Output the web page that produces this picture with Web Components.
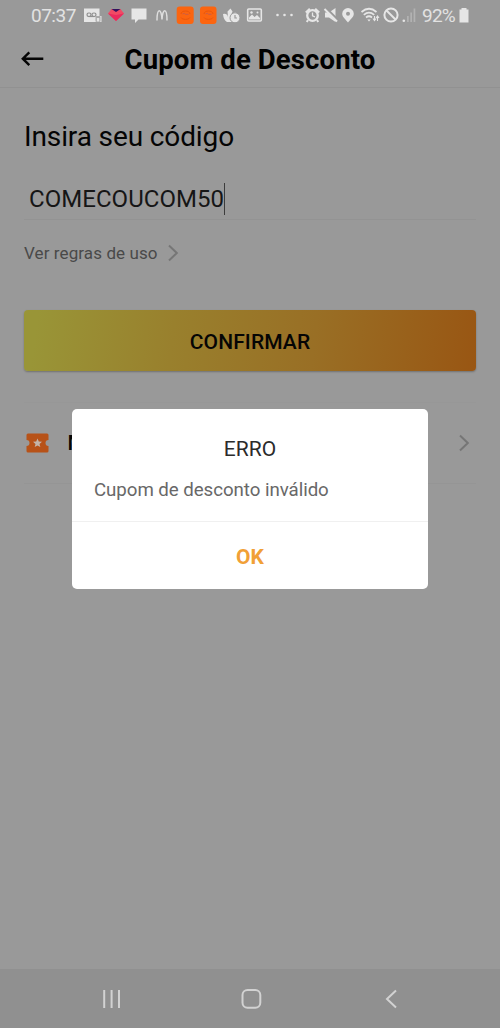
<!DOCTYPE html>
<html lang="pt-BR">
<head>
<meta charset="utf-8">
<title>Cupom de Desconto</title>
<style>
html,body{margin:0;height:100%;background:#999}
body{font-family:Roboto,"Liberation Sans",sans-serif;overflow:hidden}
</style>
</head>
<body>
<coupon-app></coupon-app>
<script>
const define = (name, html) => customElements.define(name, class extends HTMLElement {
  constructor() {
    super();
    const t = document.createElement('template');
    t.innerHTML = html;
    this.attachShadow({mode: 'open'}).appendChild(t.content.cloneNode(true));
  }
});

/* Each status glyph is a cell of the bar: its left edge, its width and its shapes. */
const cell = (x, w, shapes) => `<svg width="${w}" height="32" viewBox="${x} 0 ${w} 32">${shapes}</svg>`;

define('status-bar', `
<style>
:host{display:flex;height:32px;align-items:center;color:#e2e2e2;padding-left:31px;box-sizing:border-box}
svg{display:block;flex:none;fill:#e6e6e6}
span{flex:none;font-size:19px;line-height:32px;white-space:nowrap}
.time{width:49px;letter-spacing:-.5px}
.pct{width:37px;letter-spacing:-.8px}
</style>
<span class="time">07:37</span>` +
cell(80, 24, `<path d="M84 8.500h15.500v7.500h2V22H84z"/><rect x="87" y="13" width="4" height="3.500" rx="1.700" fill="none" stroke="#8f8f8f" stroke-width="1.200"/><rect x="92" y="13" width="4" height="3.500" rx="1.700" fill="none" stroke="#8f8f8f" stroke-width="1.200"/><path d="M88.500 16.500h6" stroke="#8f8f8f" stroke-width="1.200"/><rect x="95.500" y="16" width="5" height="6" rx="1" fill="#aaa"/><path d="M96.800 18h2.500v3.500h-2.500z"/>`) +
cell(104, 24, `<path d="M111.500 9h9l3.500 4.500-8 7.500-8-7.500z" fill="#f04a64"/><path d="M108 13.500l8 1.500 8-1.500-8 7.500z" fill="#ea2a5d"/><path d="M111.500 9h9l-4.500 3z" fill="#31125e"/>`) +
cell(128, 24, `<path d="M131.500 8.500h15v11h-8l-3.500 3.500v-3.500h-3.500z"/>`) +
cell(152, 22, `<path d="M157 20.500c0-13 4.500-12.500 5-1 .5-11.500 5-12 5 1" fill="none" stroke="#dedede" stroke-width="1.500"/>`) +
cell(174, 24, `<rect x="176.700" y="6.500" width="17" height="17.500" rx="3" fill="#fb6510"/><path d="M181 14c0-4 9-4 9 0M181 17.500c1.500 2.500 7.500 2.500 9 0" fill="none" stroke="#e9560c" stroke-width="1"/><path d="M182.500 14q2-1.500 3 .3h3" fill="none" stroke="#cb5d45" stroke-width="1"/>`) +
cell(198, 24, `<rect x="200" y="6.500" width="16.500" height="17.500" rx="3" fill="#fb6510"/><path d="M204 14c0-4 9-4 9 0M204 17.500c1.500 2.500 7.500 2.500 9 0" fill="none" stroke="#e9560c" stroke-width="1"/><path d="M205.500 14q2-1.500 3 .3h3" fill="none" stroke="#cb5d45" stroke-width="1"/>`) +
cell(222, 22, `<path d="M223 14q4-1 5 3l-.5-5.500 3-3 2 3-2 5q2-4 5.500-4l-3.500 9.500h-5.500q-3.500-2-4-8z"/><circle cx="235" cy="17.800" r="5" stroke="#999" stroke-width="1"/><path d="M235 15v3h2" fill="none" stroke="#999" stroke-width="1.200"/>`) +
cell(244, 28, `<rect x="247.700" y="9" width="13.600" height="12" rx="1" fill="none" stroke="#e6e6e6" stroke-width="1.600"/><path d="M249 19.500v-2l3-3 2.500 2.500 2.500-2 3 3v1.500z"/><circle cx="251.500" cy="12.500" r="1.200"/><circle cx="257.500" cy="12.500" r="1"/>`) +
cell(272, 30, `<circle cx="277.500" cy="15" r="1.300"/><circle cx="284.500" cy="15" r="1.300"/><circle cx="291.500" cy="15" r="1.300"/>`) +
cell(302, 20, `<path d="M305.800 12.500l4-3.800M319.200 12.500l-4-3.800M308 20l-1.200 2M317 20l1.200 2" fill="none" stroke="#e6e6e6" stroke-width="2"/><circle cx="312.500" cy="15.500" r="5.300" fill="none" stroke="#e6e6e6" stroke-width="2.300"/><path d="M312.500 12.500v3.300l2.500 1" fill="none" stroke="#e6e6e6" stroke-width="1.300"/>`) +
cell(322, 18, `<path d="M325 12.500h4l6.500-4.500v14l-6.500-4.500h-4z"/><path d="M325.500 9.500l12 12" stroke="#999" stroke-width="2.400" transform="translate(1 -1)"/><path d="M324.500 9l12.500 12.500" stroke="#e6e6e6" stroke-width="2"/>`) +
cell(340, 18, `<path d="M348 8a5.800 5.800 0 0 1 5.800 5.700c0 3.500-3.800 5.800-5.800 8.800-2-3-5.800-5.300-5.800-8.800A5.800 5.800 0 0 1 348 8zm0 3.700a2 2 0 1 0 0 4 2 2 0 0 0 0-4z" fill-rule="evenodd"/>`) +
cell(358, 24, `<path d="M361.500 12q7.500-6.500 15 0M363.800 14.800q5.200-4.500 10.400 0M366 17.500q3-2.500 6 0" fill="none" stroke="#e6e6e6" stroke-width="1.700"/><path d="M367.300 19.500h3.400L369 21.500z"/><path d="M374.500 16v4M377.500 21v-4.500M373 18.500l1.500 2 1.500-2M376 18l1.500-2 1.500 2" fill="none" stroke="#e6e6e6" stroke-width="1.100"/>`) +
cell(382, 19, `<circle cx="391" cy="15" r="6.600" fill="none" stroke="#e6e6e6" stroke-width="2"/><path d="M386.500 10.500l9 9" stroke="#e6e6e6" stroke-width="2"/>`) +
cell(401, 21, `<circle cx="403.800" cy="20.800" r="1.300"/><path d="M407 16h1.700v6H407zM410.300 12.500h1.700V22h-1.700zM413.600 8.500h1.700V22h-1.700z" fill="#b2b2b2"/>`) +
`<span class="pct">92%</span>` +
cell(459, 12, `<path d="M461.500 8h5v1.500h2V22.500h-9V9.500h2z"/>`));

define('app-header', `
<style>
:host{display:grid;grid-template-columns:72px 1fr 72px;height:56px;align-items:center;box-sizing:border-box;border-bottom:1px solid #919191}
svg{display:block;margin:-2px 0 0 20px}
h1{margin:1px 0 0;font-size:27.500px;letter-spacing:.12px;font-weight:700;line-height:36px;text-align:center;white-space:nowrap;color:#000}
</style>
<svg width="26" height="20" viewBox="0 0 26 20" fill="none" stroke="#050505" stroke-width="2.400"><path d="M23.300 9.700H3M9.300 3.300L2.800 9.700l6.500 6.400"/></svg>
<h1><slot></slot></h1>`);

define('chevron-icon', `
<style>:host{display:block;flex:none}svg{display:block}</style>
<svg width="12" height="18" viewBox="0 0 12 18" fill="none" stroke="#767676" stroke-width="2"><path d="M2 1.500L9.800 9 2 16.500"/></svg>`);

define('code-field', `
<style>
:host{display:block}
h2{margin:0;font-weight:400;font-size:28px;letter-spacing:-.12px;line-height:36px;color:#050505;white-space:nowrap}
.input{display:flex;align-items:center;height:40px;margin-top:24px;padding-left:5px;border-bottom:1px solid #939393;font-size:24px;color:#161616}
.text{letter-spacing:.05px;white-space:nowrap}
.caret{width:1px;height:32px;background:#3c3c3c}
</style>
<h2><slot name="label"></slot></h2>
<div class="input"><span class="text"><slot></slot></span><i class="caret"></i></div>`);

define('rules-link', `
<style>
:host{display:flex;align-items:center;height:24px;font-size:17px;letter-spacing:.1px;color:#494949;gap:9px;white-space:nowrap}
</style>
<span><slot></slot></span><chevron-icon></chevron-icon>`);

define('confirm-button', `
<style>
:host{display:flex;height:61px;align-items:center;justify-content:center;border-radius:4px;background:linear-gradient(97deg,#999537 3%,#99802d 33%,#996f25 64%,#995613 100%);box-shadow:0 1px 2px #0004;color:#050505;font-size:21px;letter-spacing:.1px;font-weight:500}
span{padding-top:2px}
</style>
<span><slot></slot></span>`);

define('coupon-row', `
<style>
:host{display:flex;align-items:center;height:82px;box-sizing:border-box;border-top:1px solid #979797;border-bottom:1px solid #959595;padding:0 6px 0 2px}
.label{flex:1;margin-left:18.500px;font-size:21px;font-weight:500;color:#050505}
svg{display:block}
</style>
<svg width="23" height="20" viewBox="0 0 23 20"><path d="M2 .5h19a1.500 1.500 0 0 1 1.500 1.500v5a3 3 0 0 0 0 6V18a1.500 1.500 0 0 1-1.500 1.500H2A1.500 1.500 0 0 1 .5 18v-5a3 3 0 0 0 0-6V2A1.500 1.500 0 0 1 2 .5z" fill="#b75218"/><path d="M11.500 5.500l1.300 3 3.200.3-2.500 2.100.8 3.200-2.800-1.700-2.800 1.700.8-3.200L7 8.800l3.200-.3z" fill="#c4b4a8"/></svg>
<span class="label"><slot></slot></span><chevron-icon></chevron-icon>`);

define('error-dialog', `
<style>
:host{display:flex;flex-direction:column;width:356px;height:180px;border-radius:5px;background:#fff;overflow:hidden}
.body{height:113px;box-sizing:border-box;padding:25px 22px 0;border-bottom:1px solid #f0f0f0}
h3{margin:0;text-align:center;font-size:21px;line-height:30px;font-weight:400;color:#2b2b2b}
p{margin:12px 0 0;font-size:18.700px;letter-spacing:-.05px;line-height:28px;color:#686868;white-space:nowrap}
.action{flex:1;display:flex;align-items:center;justify-content:center;color:#f1a036;font-size:21px;font-weight:700;padding-top:2px}
</style>
<div class="body"><h3><slot name="title"></slot></h3><p><slot></slot></p></div>
<div class="action"><slot name="action"></slot></div>`);

define('nav-bar', `
<style>
:host{display:flex;height:59px;background:#909090;align-items:center;justify-content:space-between;padding:0 99px 0 98px;box-sizing:border-box}
svg{display:block;fill:none;stroke:#d2d2d2;stroke-width:2}
</style>
<svg width="26" height="22" viewBox="98 988 26 22"><path d="M104.200 990v18M111.600 990v18M119 990v18"/></svg>
<svg width="26" height="22" viewBox="239 988 26 22"><rect x="242.500" y="990" width="17.800" height="17.800" rx="5"/></svg>
<svg width="22" height="22" viewBox="379.500 988 22 22"><path d="M396.500 990.500l-9 8.500 9 8.500"/></svg>`);

define('coupon-app', `
<style>
:host{display:flex;flex-direction:column;position:relative;width:500px;height:1028px;background:#999;overflow:hidden}
main{flex:1;padding:31px 24px 0}
rules-link{margin-top:21px}
confirm-button{margin-top:45px}
coupon-row{margin-top:31px}
.overlay{position:absolute;inset:0;display:flex;align-items:flex-start;justify-content:center;padding-top:409px}
</style>
<status-bar></status-bar>
<app-header>Cupom de Desconto</app-header>
<main>
<code-field><span slot="label">Insira seu código</span>COMECOUCOM50</code-field>
<rules-link>Ver regras de uso</rules-link>
<confirm-button>CONFIRMAR</confirm-button>
<coupon-row>M</coupon-row>
</main>
<nav-bar></nav-bar>
<div class="overlay"><error-dialog><span slot="title">ERRO</span>Cupom de desconto inválido<span slot="action">OK</span></error-dialog></div>`);
</script>
</body>
</html>
